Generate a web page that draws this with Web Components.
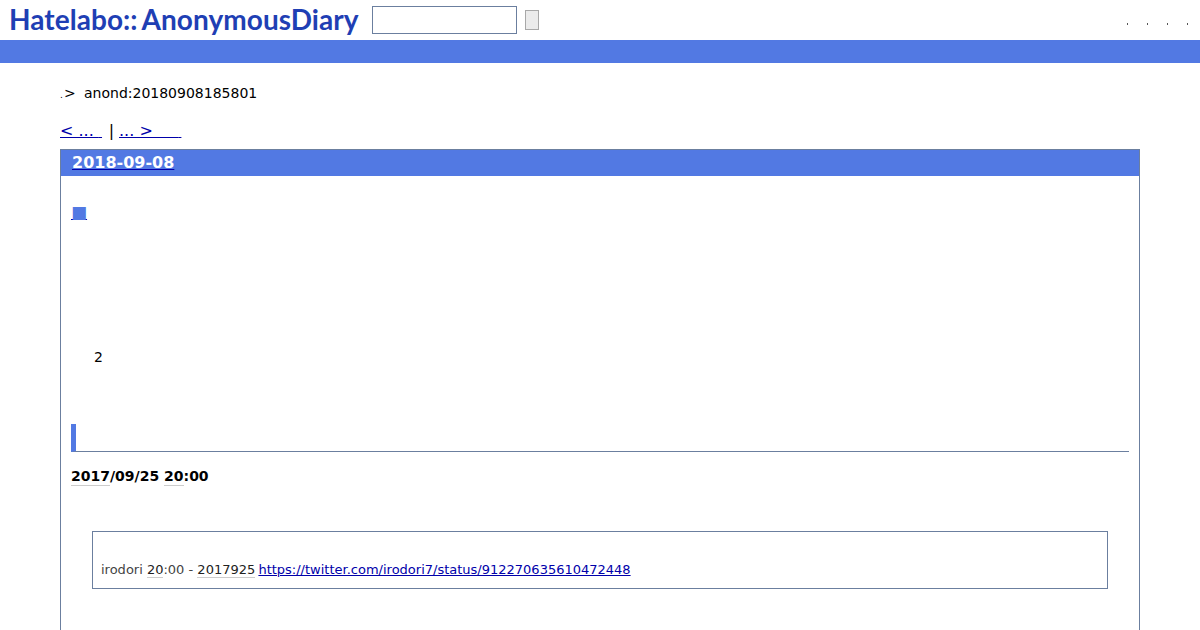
<!DOCTYPE html>
<html>
<head>
<meta charset="utf-8">
<title>Hatelabo::AnonymousDiary</title>
<style>
  html, body { margin: 0; padding: 0; height: 630px; overflow: hidden; background: #fff; }
  body { font: 14px "DejaVu Sans", sans-serif; color: #000; }
</style>
</head>
<body>
<site-header></site-header>
<main-page>
  <bread-crumb slot="crumb"></bread-crumb>
  <page-nav slot="nav"></page-nav>
  <day-box slot="day" date="2018-09-08">
    <a href="#" style="display:block;width:15px;color:#5279e3;font-size:17px;line-height:21px;height:21px;margin:26px 0 0 0;text-decoration-color:#0000aa;">■</a>
    <p style="margin:126px 0 0 23px;line-height:17px;height:17px;">2</p>
    <section-head style="margin-top:58px"></section-head>
    <post-time style="margin-top:16px"></post-time>
    <quote-box style="margin-top:46px">irodori <mark-under>20</mark-under>:00 - <mark-under>2017925</mark-under> <a href="#" style="color:#0000aa;margin-left:-1px">https://twitter.com/irodori7/status/912270635610472448</a></quote-box>
  </day-box>
</main-page>

<script>
  class SiteHeader extends HTMLElement {
    constructor() {
      super();
      this.attachShadow({ mode: 'open' });
      this.shadowRoot.innerHTML = `
        <style>
          :host { display: block; }
          .top { display: flex; align-items: center; height: 40px; padding-left: 9px; box-sizing: border-box; }
          .logo {
            display: flex; gap: 4px; width: 349px; margin-right: 14px; padding-bottom: 3px; white-space: nowrap;
            font: bold 28px Lato, sans-serif; color: #1f3fb4; letter-spacing: 0.05px;
          }
          input { width: 145px; height: 28px; box-sizing: border-box; border: 1px solid #6b7f9f; background: #fff; padding: 0; margin: 0; }
          button { width: 14px; height: 20px; box-sizing: border-box; margin: 0 0 0 8px; padding: 0; border: 1px solid #a8a8a8; background: #ebebeb; }
          .dots { display: flex; gap: 19px; margin-left: auto; margin-right: 12px; padding-top: 8px; }
          .dots span { width: 1px; height: 2px; background: #555; }
          .bar { height: 23px; background: #5279e3; }
        </style>
        <div class="top">
          <div class="logo"><span>Hatelabo::</span><span>AnonymousDiary</span></div>
          <input type="text"><button type="button"></button>
          <div class="dots"><span></span><span></span><span></span><span></span></div>
        </div>
        <div class="bar"></div>
      `;
    }
  }

  class MainPage extends HTMLElement {
    constructor() {
      super();
      this.attachShadow({ mode: 'open' });
      this.shadowRoot.innerHTML = `
        <style>
          :host { display: block; padding: 0 60px; }
        </style>
        <slot name="crumb"></slot>
        <slot name="nav"></slot>
        <slot name="day"></slot>
      `;
    }
  }

  class BreadCrumb extends HTMLElement {
    constructor() {
      super();
      this.attachShadow({ mode: 'open' });
      this.shadowRoot.innerHTML = `
        <style>
          :host { display: flex; align-items: baseline; height: 17px; margin-top: 22px; line-height: 17px; white-space: pre; }
          .dot { width: 4px; font-size: 9px; }
          .gt { width: 20px; }
        </style>
        <span class="dot">.</span><span class="gt">&gt;</span><span>anond:20180908185801</span>
      `;
    }
  }

  class PageNav extends HTMLElement {
    constructor() {
      super();
      this.attachShadow({ mode: 'open' });
      this.shadowRoot.innerHTML = `
        <style>
          :host { display: flex; height: 19px; margin-top: 19px; margin-bottom: 9px; font-size: 16px; line-height: 19px; white-space: pre; }
          a { color: #0000aa; }
          small { font-size: 10px; }
          .sep { width: 17px; box-sizing: border-box; padding-left: 2px; text-align: center; }
        </style>
        <a href="#">&lt; ...&nbsp;<small>&nbsp;</small></a><span class="sep">|</span><a href="#">... &gt;&nbsp;&nbsp;&nbsp;&nbsp;&nbsp;<small>&nbsp;</small></a>
      `;
    }
  }

  class DayBox extends HTMLElement {
    constructor() {
      super();
      this.attachShadow({ mode: 'open' });
      this.shadowRoot.innerHTML = `
        <style>
          :host { display: block; box-sizing: border-box; height: 481px; border: 1px solid #6b7f9f; border-bottom: 0; }
          h2 { margin: 0; height: 26px; padding: 0 11px; background: #5279e3; font-size: 16px; line-height: 26px; }
          a { color: #fff; text-decoration-color: #0000aa; }
          .body { padding: 0 10px; }
        </style>
        <h2><a href="#"></a></h2>
        <div class="body"><slot></slot></div>
      `;
      this.shadowRoot.querySelector('a').textContent = this.getAttribute('date');
    }
  }

  class SectionHead extends HTMLElement {
    constructor() {
      super();
      this.attachShadow({ mode: 'open' });
      this.shadowRoot.innerHTML = `
        <style>
          :host { display: block; height: 27px; border-left: 5px solid #5279e3; border-bottom: 1px solid #6b7f9f; }
        </style>
      `;
    }
  }

  class PostTime extends HTMLElement {
    constructor() {
      super();
      this.attachShadow({ mode: 'open' });
      this.shadowRoot.innerHTML = `
        <style>
          :host { display: block; font-weight: bold; line-height: 17px; }
          span { border-bottom: 1px solid #ccc; padding-bottom: 1px; }
        </style>
        <span>2017</span>/09/25 <span>20</span>:00
      `;
    }
  }

  class QuoteBox extends HTMLElement {
    constructor() {
      super();
      this.attachShadow({ mode: 'open' });
      this.shadowRoot.innerHTML = `
        <style>
          :host { display: block; margin-left: 21px; margin-right: 21px; box-sizing: border-box; height: 58px; padding: 29px 8px 0; border: 1px solid #6b7f9f; font-size: 13px; line-height: 17px; color: #444; }
        </style>
        <slot></slot>
      `;
    }
  }

  class MarkUnder extends HTMLElement {
    constructor() {
      super();
      this.attachShadow({ mode: 'open' });
      this.shadowRoot.innerHTML = `<style>:host { display: inline; color: #222; border-bottom: 1px solid #ccc; }</style><slot></slot>`;
    }
  }

  customElements.define('site-header', SiteHeader);
  customElements.define('main-page', MainPage);
  customElements.define('bread-crumb', BreadCrumb);
  customElements.define('page-nav', PageNav);
  customElements.define('day-box', DayBox);
  customElements.define('section-head', SectionHead);
  customElements.define('post-time', PostTime);
  customElements.define('quote-box', QuoteBox);
  customElements.define('mark-under', MarkUnder);
</script>
</body>
</html>
